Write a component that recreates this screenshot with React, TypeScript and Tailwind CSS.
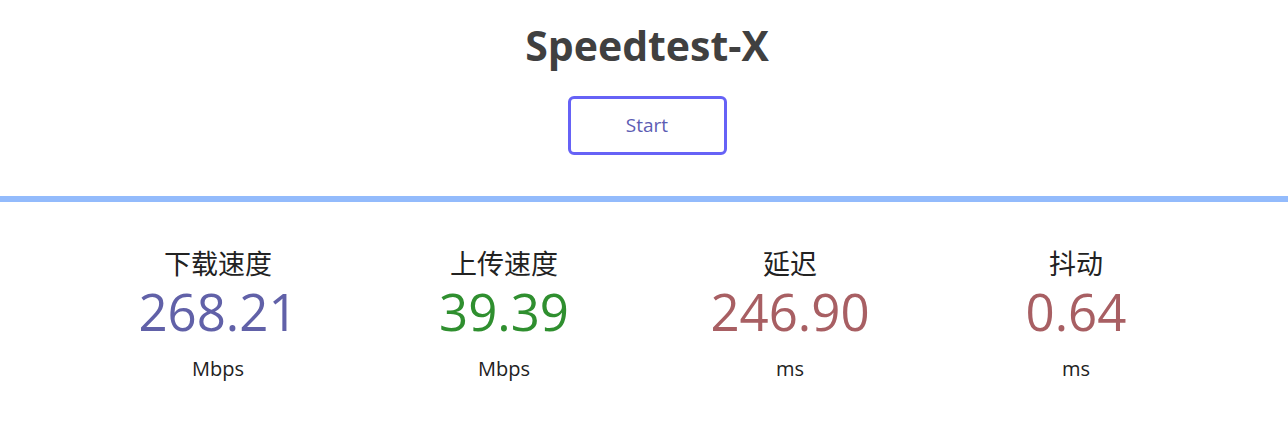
export default function App() {
  const stats = [
    { label: "下载速度", value: "268.21", unit: "Mbps", color: "text-[#6161a8]" },
    { label: "上传速度", value: "39.39", unit: "Mbps", color: "text-[#2f8f2f]" },
    { label: "延迟", value: "246.90", unit: "ms", color: "text-[#a85f63]" },
    { label: "抖动", value: "0.64", unit: "ms", color: "text-[#a85f63]" },
  ];

  return (
    <div className="min-h-screen bg-white font-['Open_Sans','Noto_Sans_CJK_SC',sans-serif]">
      {/* Header */}
      <div className="flex flex-col items-center pl-[6px] pt-[18px]">
        <h1 className="text-[41px] font-bold leading-[54px] text-[#404040]">Speedtest-X</h1>
        <button className="mt-[24px] h-[59px] w-[159px] rounded-md border-[3px] border-[#6662f6] text-[19px] text-[#5d5cb3]">
          Start
        </button>
      </div>

      <div className="mt-[41px] h-[6px] bg-[#93bbfc]" />

      {/* Results */}
      <div className="ml-[75px] mt-[43px] grid w-[1144px] grid-cols-4">
        {stats.map((s) => (
          <div key={s.label} className="flex flex-col items-center">
            <div className="text-[27px] leading-[38px] text-[#222]">{s.label}</div>
            <div className={`text-[51px] leading-[56px] ${s.color}`}>{s.value}</div>
            <div className="mt-[17px] text-[20px] leading-[26px] text-[#222]">{s.unit}</div>
          </div>
        ))}
      </div>
    </div>
  );
}
